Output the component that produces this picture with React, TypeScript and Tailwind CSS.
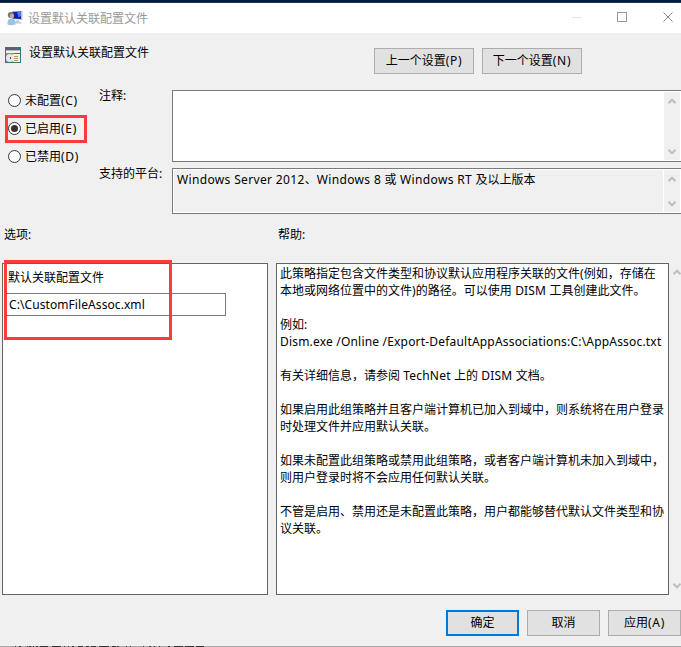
import { useState } from "react";

const helpLines = [
  "此策略指定包含文件类型和协议默认应用程序关联的文件(例如，存储在",
  "本地或网络位置中的文件)的路径。可以使用 DISM 工具创建此文件。",
  "",
  "例如:",
  "Dism.exe /Online /Export-DefaultAppAssociations:C:\\AppAssoc.txt",
  "",
  "有关详细信息，请参阅 TechNet 上的 DISM 文档。",
  "",
  "如果启用此组策略并且客户端计算机已加入到域中，则系统将在用户登录",
  "时处理文件并应用默认关联。",
  "",
  "如果未配置此组策略或禁用此组策略，或者客户端计算机未加入到域中，",
  "则用户登录时将不会应用任何默认关联。",
  "",
  "不管是启用、禁用还是未配置此策略，用户都能够替代默认文件类型和协",
  "议关联。",
];

const states = ["未配置(C)", "已启用(E)", "已禁用(D)"];

// latin runs are set a little wider than the chinese text around them
function Mixed({ text, tracking = "tracking-[0.19px]" }: { text: string; tracking?: string }) {
  return (
    <>
      {text.split(/([\x20-\x7e]+)/).map((part, index) => (
        index % 2 === 1 ? <span key={index} className={tracking}>{part}</span> : part
      ))}
    </>
  );
}

function Chevron({ down = false }: { down?: boolean }) {
  return (
    <svg width="8" height="6" viewBox="0 0 8 6" className="block shrink-0">
      <path d={down ? "M0.5 0.8L4 4.3L7.5 0.8" : "M0.5 5.2L4 1.7L7.5 5.2"} fill="none" stroke="#bfbfbf" strokeWidth="2" />
    </svg>
  );
}

function ScrollBar() {
  return (
    <div className="flex w-4 shrink-0 flex-col items-center justify-between bg-[#f0f0f0] pt-1.5 pb-[5px]">
      <Chevron />
      <Chevron down />
    </div>
  );
}

function ComputerIcon() {
  return (
    <svg width="16" height="16" viewBox="0 0 16 16" className="block">
      <path d="M5 1L15.5 1L15.5 10L5 9Z" fill="#b9c3cf" />
      <path d="M5.5 2L14 1.6L14 9L6 8.5Z" fill="#0a22b8" />
      <path d="M10 1.8H14V6L11.5 7.5Z" fill="#4a7cf0" />
      <path d="M9 10.5H12V12H14.5V13.5H8Z" fill="#c4c8cc" />
      <circle cx="3.8" cy="5" r="3" fill="#77777a" />
      <circle cx="5" cy="6" r="2.2" fill="#cfa887" />
      <path d="M0.5 14.5C0 10.5 2 8.5 4.5 8.5C7.5 8.5 9 11 8.5 14.5C6 15.5 3 15.5 0.5 14.5Z" fill="#9cc3e2" />
    </svg>
  );
}

function PolicyIcon() {
  return (
    <svg width="16" height="16" viewBox="0 0 16 16" className="block" shapeRendering="crispEdges">
      <rect width="16" height="16" fill="#35787c" />
      <rect x="1" y="1" width="12" height="2" fill="#5a5f80" />
      <rect x="1" y="3" width="14" height="1" fill="#b9bba8" />
      <rect x="1" y="4" width="14" height="2" fill="#f3f3ee" />
      <rect x="1" y="6" width="8" height="9" fill="#8d8d92" />
      <circle cx="5" cy="11" r="4" fill="#e6e6f0" shapeRendering="auto" />
      <rect x="5" y="10" width="1" height="2" fill="#444" />
      <rect x="8" y="7" width="7" height="8" fill="#fff2c4" />
      <rect x="9" y="9" width="4" height="1" fill="#b09a6a" />
      <rect x="9" y="11" width="4" height="1" fill="#b09a6a" />
      <rect x="9" y="13" width="4" height="1" fill="#b09a6a" />
    </svg>
  );
}

export default function App() {
  const [selected, setSelected] = useState(1);
  const [path, setPath] = useState("C:\\CustomFileAssoc.xml");

  return (
    <div className="relative flex h-[647px] w-[681px] flex-col overflow-hidden bg-[#f0f0f0] font-['Noto_Sans','Noto_Sans_CJK_SC',sans-serif] text-[12px] leading-4 whitespace-nowrap text-black">
      <div className="h-[3px] shrink-0 border-b border-[#20344c] bg-[#001c40]" />
      <header className="flex h-[30px] shrink-0 items-center bg-white pl-[7px] text-[#999]">
        <ComputerIcon />
        <h1 className="ml-[5px] flex-1 pt-px">设置默认关联配置文件</h1>
        <svg width="109" height="12" viewBox="0 0 109 12" fill="none" className="mb-1 block" shapeRendering="crispEdges">
          <path d="M0 7.5H10" stroke="#e6e6e6" />
          <path d="M45.5 2.5H54.5V11.5H45.5Z" stroke="#999" />
          <path d="M91.5 2.5L100.5 11.5M100.5 2.5L91.5 11.5" stroke="#888" shapeRendering="auto" />
        </svg>
      </header>

      <div className="flex h-[57px] shrink-0 pl-[5px]">
        <div className="mt-3.5">
          <PolicyIcon />
        </div>
        <div className="mt-3 ml-2 w-[345px]">设置默认关联配置文件</div>
        <div className="mt-[15px] flex gap-2">
          <button className="h-[26px] w-[100px] border border-[#adadad] bg-[#e1e1e1]"><Mixed text="上一个设置(P)" tracking="tracking-[0.7px]" /></button>
          <button className="h-[26px] w-[100px] border border-[#adadad] bg-[#e1e1e1]"><Mixed text="下一个设置(N)" tracking="tracking-[0.7px]" /></button>
        </div>
      </div>

      <div className="flex h-[124px] shrink-0">
        <div className="flex w-[99px] flex-col gap-3 pt-0.5 pl-2">
          {states.map((name, index) => (
            <button key={index} className="flex h-4 items-center gap-1" onClick={() => { setSelected(index) }}>
              <span className="flex size-[13px] items-center justify-center rounded-full border border-[#333] bg-white">
                {selected === index && <span className="size-[7px] rounded-full bg-[#333]" />}
              </span>
              <span className="pt-0.5"><Mixed text={name} tracking="tracking-[0.7px]" /></span>
            </button>
          ))}
        </div>
        <div className="w-[73px] shrink-0">
          <div className="-mt-0.5 h-[78px]">注释:</div>
          <div>支持的平台:</div>
        </div>
        <div className="flex flex-1 flex-col gap-1.5">
          <div className="flex h-[72px] justify-end border border-r-0 border-[#7a7a7a] bg-white py-px pr-px">
            <ScrollBar />
          </div>
          <div className="flex h-[46px] border border-r-0 border-[#7a7a7a] bg-white p-px">
            <div className="mr-px flex-1 bg-[#f0f0f0] pt-0.5 pl-[3px]">
              <Mixed text="Windows Server 2012、Windows 8 或 Windows RT 及以上版本" tracking="tracking-[0.35px]" />
            </div>
            <ScrollBar />
          </div>
        </div>
      </div>

      <div className="flex h-[49px] shrink-0 pt-[13px] pl-1">
        <div className="w-[274px]">选项:</div>
        <div>帮助:</div>
      </div>

      <div className="flex h-[332px] shrink-0 pl-0.5">
        <section className="w-[266px] border border-[#646464] bg-white pt-1.5 pl-[3px]">
          <div className="h-[23px] pl-0.5">默认关联配置文件</div>
          <input
            className="h-[23px] w-[220px] border border-[#7a7a7a] bg-white pl-0.5 tracking-[0.08px] outline-none"
            value={path}
            onChange={(e) => { setPath(e.target.value) }}
          />
        </section>
        <section className="ml-2 w-[393px] border border-[#646464] bg-white pt-px pl-[3px]">
          {helpLines.map((line, index) => (
            <p key={index} className="h-[17px] leading-[17px]"><Mixed text={line} /></p>
          ))}
        </section>
        <div className="ml-1 flex shrink-0 flex-col justify-between py-1.5">
          <Chevron />
          <Chevron down />
        </div>
      </div>

      <footer className="flex h-[51px] shrink-0 gap-2 pt-[15px] pl-[446px]">
        <button className="h-[26px] w-[73px] shrink-0 border-2 border-[#0078d7] bg-[#e1e1e1]">确定</button>
        <button className="h-[26px] w-[73px] shrink-0 border border-[#adadad] bg-[#e1e1e1]">取消</button>
        <button className="h-[26px] w-[73px] shrink-0 border border-[#adadad] bg-[#e1e1e1]"><Mixed text="应用(A)" tracking="tracking-[0.7px]" /></button>
      </footer>
      {/* edge of the window behind */}
      <svg width="681" height="1" viewBox="0 0 681 1" className="block shrink-0" shapeRendering="crispEdges">
        <path d="M0 0.5H681" stroke="#a8a8a8" />
        <path d="M15 0.5h1M19 0.5h2M27 0.5h1M29 0.5h2M33 0.5h1M36 0.5h2M40 0.5h8M52 0.5h9M64 0.5h1M68 0.5h1M72 0.5h2M78 0.5h5M86 0.5h3M91 0.5h5M99 0.5h10M112 0.5h4M117 0.5h2M126 0.5h1M130 0.5h1M143 0.5h1M149 0.5h2M154 0.5h1M159 0.5h1M168 0.5h2M174 0.5h9M185 0.5h9M196 0.5h8" stroke="#333" />
      </svg>

      {/* highlight frames */}
      <div className="pointer-events-none absolute top-[115px] left-[5px] h-7 w-[82px] border-3 border-[#fb3b3b]" />
      <div className="pointer-events-none absolute top-[260px] left-1 h-20 w-[168px] border-3 border-[#fb3b3b]" />
    </div>
  );
}
